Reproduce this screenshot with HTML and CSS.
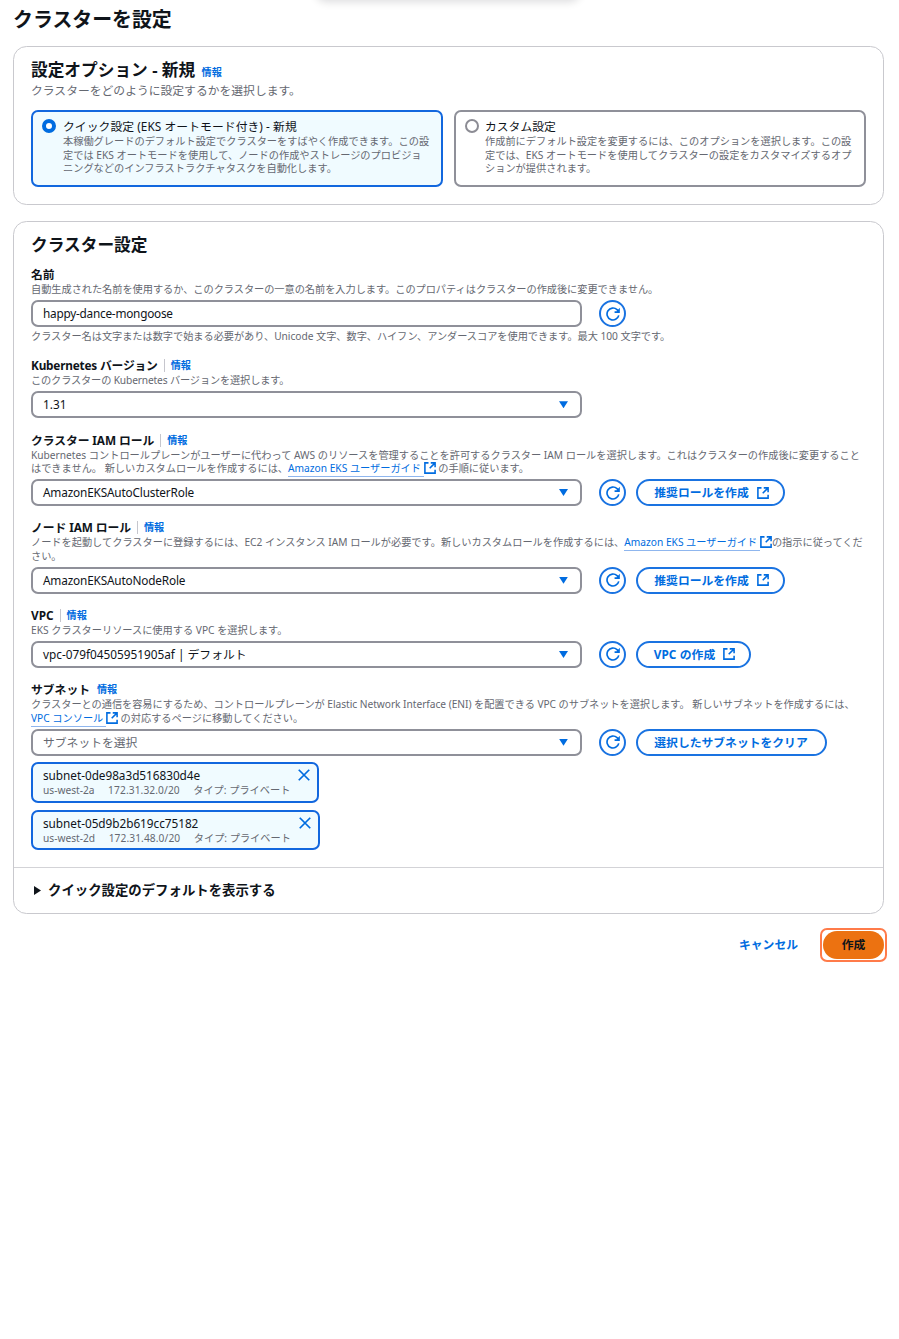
FILE: index.html
```html
<!DOCTYPE html>
<html lang="ja">
<head>
<meta charset="utf-8">
<title>クラスターを設定</title>
<link rel="stylesheet" href="styles.css">
</head>
<body>
<svg class="defs" aria-hidden="true">
  <symbol id="refresh" viewBox="0 0 16 16">
    <path d="M14.6 9.6A6.8 6.8 0 1 1 12.6 3L14.6 5" fill="none" stroke="currentColor" stroke-width="1.9"/>
    <path d="M15.8 .8v6H9.8v-1.9h2.4z" fill="currentColor"/>
  </symbol>
  <symbol id="external" viewBox="0 0 16 16">
    <path d="M6 1.2H1.2v13.6h13.6V10.4M9 1.2h5.8V7M14.8 1.2L7.6 8.4" fill="none" stroke="currentColor" stroke-width="2.1"/>
  </symbol>
  <symbol id="close" viewBox="0 0 16 16">
    <path d="M2 2l12 12M14 2L2 14" fill="none" stroke="currentColor" stroke-width="2"/>
  </symbol>
</svg>
<div class="flash"></div>
<main class="page">
  <h1 class="title">クラスターを設定</h1>

  <section class="card options">
    <h2 class="heading">設定オプション - 新規 <a class="info">情報</a></h2>
    <p class="lead">クラスターをどのように設定するかを選択します。</p>
    <div class="tiles">
      <div class="tile selected">
        <span class="radio"></span>
        <div>
          <div class="tile-label t-quick">クイック設定 (EKS オートモード付き) - 新規</div>
          <div class="desc">本稼働グレードのデフォルト設定でクラスターをすばやく作成できます。この設<br>定では EKS オートモードを使用して、ノードの作成やストレージのプロビジョ<br>ニングなどのインフラストラクチャタスクを自動化します。</div>
        </div>
      </div>
      <div class="tile">
        <span class="radio"></span>
        <div>
          <div class="tile-label">カスタム設定</div>
          <div class="desc">作成前にデフォルト設定を変更するには、このオプションを選択します。この設<br>定では、EKS オートモードを使用してクラスターの設定をカスタマイズするオプ<br>ションが提供されます。</div>
        </div>
      </div>
    </div>
  </section>

  <section class="card settings">
    <div class="form">
      <h2 class="heading">クラスター設定</h2>

      <div class="field">
        <div class="label">名前</div>
        <div class="desc d-name">自動生成された名前を使用するか、このクラスターの一意の名前を入力します。このプロパティはクラスターの作成後に変更できません。</div>
        <div class="row">
          <div class="input"><span class="v-name">happy-dance-mongoose</span></div>
          <span class="round"><svg><use href="#refresh"/></svg></span>
        </div>
        <div class="desc d-name help">クラスター名は文字または数字で始まる必要があり、Unicode 文字、数字、ハイフン、アンダースコアを使用できます。最大 100 文字です。</div>
      </div>

      <div class="field">
        <div class="label"><span class="l-k8s">Kubernetes バージョン</span><i class="sep"></i><a class="info">情報</a></div>
        <div class="desc d-k8s">このクラスターの Kubernetes バージョンを選択します。</div>
        <div class="row"><div class="input"><span>1.31</span><i class="caret"></i></div></div>
      </div>

      <div class="field">
        <div class="label"><span class="l-cluster">クラスター IAM ロール</span><i class="sep"></i><a class="info">情報</a></div>
        <div class="desc">Kubernetes コントロールプレーンがユーザーに代わって AWS のリソースを管理することを許可するクラスター IAM ロールを選択します。これはクラスターの作成後に変更すること<br>はできません。 新しいカスタムロールを作成するには、<a class="link">Amazon EKS ユーザーガイド </a><svg class="ext"><use href="#external"/></svg> の手順に従います。</div>
        <div class="row">
          <div class="input"><span class="v-role">AmazonEKSAutoClusterRole</span><i class="caret"></i></div>
          <span class="round"><svg><use href="#refresh"/></svg></span>
          <span class="button b-role">推奨ロールを作成<svg><use href="#external"/></svg></span>
        </div>
      </div>

      <div class="field">
        <div class="label"><span class="l-cluster">ノード IAM ロール</span><i class="sep"></i><a class="info">情報</a></div>
        <div class="desc">ノードを起動してクラスターに登録するには、EC2 インスタンス IAM ロールが必要です。新しいカスタムロールを作成するには、<a class="link">Amazon EKS ユーザーガイド </a><svg class="ext"><use href="#external"/></svg>の指示に従ってくだ<br>さい。</div>
        <div class="row">
          <div class="input"><span class="v-role">AmazonEKSAutoNodeRole</span><i class="caret"></i></div>
          <span class="round"><svg><use href="#refresh"/></svg></span>
          <span class="button b-role">推奨ロールを作成<svg><use href="#external"/></svg></span>
        </div>
      </div>

      <div class="field">
        <div class="label"><span>VPC</span><i class="sep"></i><a class="info">情報</a></div>
        <div class="desc">EKS クラスターリソースに使用する VPC を選択します。</div>
        <div class="row">
          <div class="input"><span>vpc-079f04505951905af | デフォルト</span><i class="caret"></i></div>
          <span class="round"><svg><use href="#refresh"/></svg></span>
          <span class="button b-vpc">VPC の作成<svg><use href="#external"/></svg></span>
        </div>
      </div>

      <div class="field">
        <div class="label"><span>サブネット</span><a class="info near">情報</a></div>
        <div class="desc"><span class="d-subnet">クラスターとの通信を容易にするため、コントロールプレーンが Elastic Network Interface (ENI) を配置できる VPC のサブネットを選択します。 新しいサブネットを作成するには、</span><br><a class="link">VPC コンソール </a><svg class="ext"><use href="#external"/></svg> の対応するページに移動してください。</div>
        <div class="row">
          <div class="input placeholder"><span>サブネットを選択</span><i class="caret"></i></div>
          <span class="round"><svg><use href="#refresh"/></svg></span>
          <span class="button b-clear">選択したサブネットをクリア</span>
        </div>
        <div class="tokens">
          <div class="token">
            <div>
              <div class="token-name">subnet-0de98a3d516830d4e</div>
              <div class="token-tags"><span>us-west-2a</span><span class="cidr">172.31.32.0/20</span><span>タイプ: プライベート</span></div>
            </div>
            <svg class="close"><use href="#close"/></svg>
          </div>
          <div class="token wide">
            <div>
              <div class="token-name">subnet-05d9b2b619cc75182</div>
              <div class="token-tags"><span>us-west-2d</span><span class="cidr">172.31.48.0/20</span><span>タイプ: プライベート</span></div>
            </div>
            <svg class="close"><use href="#close"/></svg>
          </div>
        </div>
      </div>
    </div>
    <div class="expander"><i class="arrow"></i>クイック設定のデフォルトを表示する</div>
  </section>

  <footer class="actions">
    <a class="cancel">キャンセル</a>
    <span class="focus"><span class="create">作成</span></span>
  </footer>
</main>
</body>
</html>
```
FILE: styles.css
```css
* { box-sizing: border-box; }
body {
  margin: 0;
  height: 1339px;
  overflow: hidden;
  position: relative;
  background: #fff;
  color: #0f141a;
  font-family: "Noto Sans", "Noto Sans CJK JP", sans-serif;
  font-size: 11.8px;
  line-height: 17px;
  white-space: nowrap;
}
h1, h2, p { margin: 0; }
i { font-style: normal; }
svg { display: block; flex: none; }
.defs { position: absolute; width: 0; height: 0; }
.flash {
  position: absolute;
  left: 318px;
  top: -20px;
  width: 260px;
  height: 19px;
  border-radius: 8px;
  box-shadow: 0 1px 8px 2px rgba(0, 7, 22, .14);
}
.page { padding: 7px 0 0 13px; width: 884px; }
.title { font-size: 19.9px; line-height: 25px; height: 39px; }
.card { border: 1px solid #c9c9ce; border-radius: 13.5px; background: #fff; }
.options { height: 159px; padding: 12px 17px 0; }
.heading { font-size: 16.7px; line-height: 22px; }
.info { color: #006ce0; font-size: 10.15px; font-weight: 700; }
.heading .info { margin-left: 2px; }
.lead { color: #656871; margin-top: -1px; }
.tiles { display: grid; grid-template-columns: 412px 412px; gap: 11px; margin-top: 11px; }
.tile {
  display: flex;
  height: 77px;
  border: 2px solid #8f9099;
  border-radius: 7px;
  padding: 6px 0 0 10px;
}
.selected { border-color: #1267de; background: #f0fbff; }
.radio {
  width: 14px;
  height: 14px;
  border: 2px solid #8c8c94;
  border-radius: 50%;
  margin: 1px 6px 0 -1px;
  background: #fff;
}
.selected .radio { border: 4.5px solid #006ce0; margin-right: 7px; }
.tile-label { line-height: 16px; }
.t-quick { letter-spacing: .06px; }
.desc { color: #656871; font-size: 10.2px; line-height: 13.6px; }
.tile .desc { margin-top: 1px; font-size: 10.21px; line-height: 13.5px; }
.settings { margin-top: 16px; height: 693px; }
.form { height: 646px; padding: 12px 17px 0; border-bottom: 1px solid #d3d3d7; }
.form .heading { height: 32.2px; }
.field { margin-bottom: 13.3px; }
.label { display: flex; align-items: center; height: 17px; font-weight: 700; }
.l-k8s { letter-spacing: -.2px; }
.l-cluster { letter-spacing: -.08px; }
.d-name { letter-spacing: -.03px; }
.d-k8s { letter-spacing: -.14px; }
.d-subnet { letter-spacing: -.035px; }
.v-name { letter-spacing: -.24px; }
.v-role { letter-spacing: -.17px; }
.sep { width: 1px; height: 13px; background: #c6c6cd; margin: 0 6px; }
.near { margin-left: 7px; }
.row { display: flex; align-items: center; height: 26.9px; margin-top: 3.4px; }
.input {
  display: flex;
  align-items: center;
  justify-content: space-between;
  width: 551px;
  height: 27px;
  border: 2px solid #8f9099;
  border-radius: 7px;
  padding: 0 12px 0 10px;
}
.placeholder { color: #656871; }
.caret { width: 9px; height: 7px; background: #006ce0; clip-path: polygon(0 0, 100% 0, 50% 100%); }
.round {
  display: grid;
  place-items: center;
  width: 27px;
  height: 27px;
  border: 2px solid #1a73e1;
  border-radius: 50%;
  color: #006ce0;
  margin: 0 10px 0 17px;
}
.round svg { width: 14px; height: 14px; }
.button {
  display: flex;
  align-items: center;
  justify-content: center;
  gap: 8px;
  height: 27px;
  border: 2px solid #1a73e1;
  border-radius: 14px;
  color: #006ce0;
  font-weight: 700;
  padding-left: 1px;
}
.button svg { width: 12px; height: 12px; }
.b-role, .b-vpc { padding-left: 2px; }
.b-role { width: 149px; }
.b-vpc { width: 115px; letter-spacing: .1px; }
.b-clear { width: 191px; padding: 0 1px 0 0; }
.help { margin-top: 3.4px; }
.link { color: #006ce0; border-bottom: 1px solid #8fb6ee; padding-bottom: 1px; }
.ext { display: inline-block; width: 12px; height: 12px; color: #006ce0; vertical-align: -1px; margin: -3px 0 -2px 0; position: relative; top: -1px; }
.tokens { display: grid; gap: 7px; margin-top: 6.6px; }
.token {
  display: flex;
  justify-content: space-between;
  width: 288px;
  height: 40.4px;
  border: 2px solid #1267de;
  border-radius: 7px;
  background: #f0fbff;
  padding: 3px 6px 0 10px;
}
.wide { width: 289px; }
.token-name { line-height: 16px; letter-spacing: -.04px; }
.token-tags { display: flex; gap: 13.5px; color: #656871; font-size: 10.2px; line-height: 14px; }
.cidr { letter-spacing: .1px; }
.close { width: 14px; height: 14px; color: #006ce0; margin-top: 1px; }
.expander { display: flex; align-items: center; height: 45px; padding-left: 20px; font-size: 13.4px; font-weight: 700; }
.arrow { width: 7px; height: 9px; background: #0f141a; clip-path: polygon(0 0, 100% 50%, 0 100%); margin-right: 7px; }
.actions { display: flex; justify-content: flex-end; align-items: center; gap: 22px; width: 874px; height: 34px; margin-top: 14px; }
.cancel { color: #006ce0; font-weight: 700; margin-top: -2px; }
.focus { display: grid; place-items: center; width: 67px; height: 34px; border: 2px solid #ff7b4a; border-radius: 7px; }
.create {
  display: grid;
  place-items: center;
  width: 61px;
  height: 28px;
  border-radius: 14px;
  background: #ec7211;
  font-weight: 700;
  padding-bottom: 1px;
}
```
